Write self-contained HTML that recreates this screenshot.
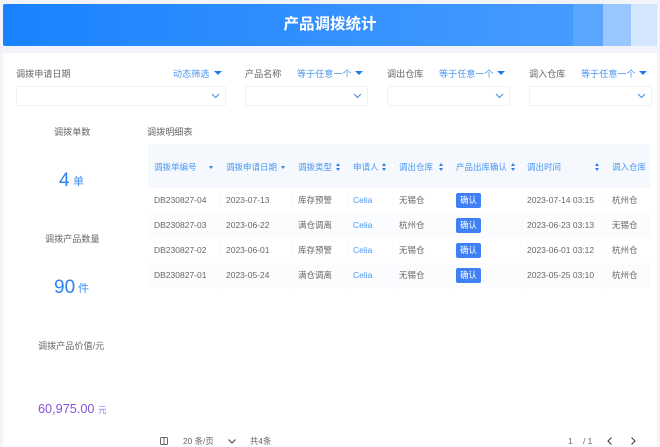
<!DOCTYPE html>
<html lang="zh"><head><meta charset="utf-8">
<style>
html,body{margin:0;padding:0;width:660px;height:447px;overflow:hidden;background:#f3f4f9}
body{position:relative;font-family:"Liberation Sans","Noto Sans CJK SC",sans-serif;color:#666;-webkit-font-smoothing:antialiased}
.a{position:absolute;white-space:nowrap;line-height:14px;font-size:9.1px}
.r{font-size:8.5px}
.hd{position:absolute;left:3px;top:4px;width:654px;height:42px;border-radius:2px;background:linear-gradient(90deg,#1a82ff,#4c9fff);overflow:hidden}
.hd i{position:absolute;top:0;height:42px;display:block}
.panel{position:absolute;left:3px;top:53px;width:654px;height:394px;background:#fff}
.sel{position:absolute;top:86px;height:20px;background:#fff;border:1px solid #eff1f5;border-radius:2px;box-sizing:border-box}
.sel svg{position:absolute;right:5px;top:6px}
.b{color:#4a96f2}
.tri{position:absolute;width:0;height:0;border-left:4px solid transparent;border-right:4px solid transparent;border-top:4.5px solid #1a7cf0}
.th{position:absolute;left:148px;top:144px;width:502px;height:44px;background:#f5f9fe}
.sep{position:absolute;top:144px;width:1px;height:145px;background:#fafbfe}
.row{position:absolute;left:148px;width:502px;height:25px}
.btn{position:absolute;left:456px;width:25px;height:15px;border-radius:2px;background:#4080f5;color:#fff;font-size:8.4px;line-height:15px;text-align:center}
.s{position:absolute;width:5px;height:9px}
.s:before{content:"";position:absolute;left:0;top:0;border-left:2.5px solid transparent;border-right:2.5px solid transparent;border-bottom:3.5px solid #2f80ea}
.s:after{content:"";position:absolute;left:0;top:4.5px;border-left:2.5px solid transparent;border-right:2.5px solid transparent;border-top:3.5px solid #2f80ea}
.d{position:absolute;border-left:2.5px solid transparent;border-right:2.5px solid transparent;border-top:3px solid #2f80ea}
</style></head><body>
<div class="hd">
<i style="left:570px;width:30px;background:#5aa6ff"></i>
<i style="left:600px;width:28px;background:#9ac6ff"></i>
<i style="left:628px;width:26px;background:#d4e6fd"></i>
</div>
<div class="a" style="left:0;width:660px;text-align:center;top:15px;line-height:20px;font-size:15.5px;font-weight:bold;color:#fff">产品调拨统计</div>
<div class="panel"></div>

<div class="a" style="left:16px;top:67px">调拨申请日期</div>
<div class="a b" style="left:173px;top:67px">动态筛选</div><div class="tri" style="left:214px;top:71px"></div>
<div class="a" style="left:245px;top:67px">产品名称</div>
<div class="a b" style="left:297px;top:67px">等于任意一个</div><div class="tri" style="left:355px;top:71px"></div>
<div class="a" style="left:387px;top:67px">调出仓库</div>
<div class="a b" style="left:439px;top:67px">等于任意一个</div><div class="tri" style="left:497px;top:71px"></div>
<div class="a" style="left:529px;top:67px">调入仓库</div>
<div class="a b" style="left:581px;top:67px">等于任意一个</div><div class="tri" style="left:639px;top:71px"></div>

<div class="sel" style="left:16px;width:210px"><svg width="9" height="6" viewBox="0 0 9 6"><path d="M1 1l3.5 3.5L8 1" fill="none" stroke="#4f8fd8" stroke-width="1.1"/></svg></div>
<div class="sel" style="left:245px;width:123px"><svg width="9" height="6" viewBox="0 0 9 6"><path d="M1 1l3.5 3.5L8 1" fill="none" stroke="#4f8fd8" stroke-width="1.1"/></svg></div>
<div class="sel" style="left:387px;width:123px"><svg width="9" height="6" viewBox="0 0 9 6"><path d="M1 1l3.5 3.5L8 1" fill="none" stroke="#4f8fd8" stroke-width="1.1"/></svg></div>
<div class="sel" style="left:529px;width:123px"><svg width="9" height="6" viewBox="0 0 9 6"><path d="M1 1l3.5 3.5L8 1" fill="none" stroke="#4f8fd8" stroke-width="1.1"/></svg></div>

<div class="a" style="left:54px;top:125px">调拨单数</div>
<div class="a" style="left:59px;top:170px;line-height:22px;font-size:19px;color:#2d82ee">4</div>
<div class="a" style="left:73px;top:175px;font-size:11px;color:#3d8bf0">单</div>
<div class="a" style="left:45px;top:232px">调拨产品数量</div>
<div class="a" style="left:54px;top:277px;line-height:22px;font-size:19px;color:#2d82ee">90</div>
<div class="a" style="left:78px;top:282px;font-size:11px;color:#3d8bf0">件</div>
<div class="a" style="left:38px;top:339px">调拨产品价值/元</div>
<div class="a" style="left:38px;top:400px;line-height:18px;font-size:12.7px;color:#8454dc">60,975.00</div>
<div class="a" style="left:98px;top:403px;font-size:8.5px;color:#9670e2">元</div>

<div class="a" style="left:147px;top:125px">调拨明细表</div>
<div class="th"></div>
<div class="row" style="top:188px;background:#fff"></div>
<div class="row" style="top:213px;background:#fbfcfe"></div>
<div class="row" style="top:238px;background:#fff"></div>
<div class="row" style="top:263px;background:#fbfcfe"></div>
<div class="sep" style="left:219px"></div><div class="sep" style="left:291px"></div><div class="sep" style="left:347px"></div><div class="sep" style="left:392px"></div><div class="sep" style="left:449px"></div><div class="sep" style="left:521px"></div><div class="sep" style="left:605px"></div>

<div class="a r b" style="left:154px;top:160px">调拨单编号</div><div class="d" style="left:209px;top:166px"></div>
<div class="a r b" style="left:226px;top:160px">调拨申请日期</div><div class="d" style="left:281px;top:166px"></div>
<div class="a r b" style="left:298px;top:160px">调拨类型</div><div class="s" style="left:336px;top:163px"></div>
<div class="a r b" style="left:353px;top:160px">申请人</div><div class="s" style="left:382px;top:163px"></div>
<div class="a r b" style="left:399px;top:160px">调出仓库</div><div class="s" style="left:439px;top:163px"></div>
<div class="a r b" style="left:456px;top:160px">产品出库确认</div><div class="s" style="left:511px;top:163px"></div>
<div class="a r b" style="left:527px;top:160px">调出时间</div><div class="s" style="left:595px;top:163px"></div>
<div class="a r b" style="left:612px;top:160px">调入仓库</div>

<div class="a r" style="left:154px;top:193px">DB230827-04</div><div class="a r" style="left:226px;top:193px">2023-07-13</div><div class="a r" style="left:298px;top:193px">库存预警</div><div class="a r b" style="left:353px;top:193px">Celia</div><div class="a r" style="left:399px;top:193px">无锡仓</div><div class="btn" style="top:193px">确认</div><div class="a r" style="left:527px;top:193px">2023-07-14 03:15</div><div class="a r" style="left:612px;top:193px">杭州仓</div>
<div class="a r" style="left:154px;top:218px">DB230827-03</div><div class="a r" style="left:226px;top:218px">2023-06-22</div><div class="a r" style="left:298px;top:218px">满仓调离</div><div class="a r b" style="left:353px;top:218px">Celia</div><div class="a r" style="left:399px;top:218px">杭州仓</div><div class="btn" style="top:218px">确认</div><div class="a r" style="left:527px;top:218px">2023-06-23 03:13</div><div class="a r" style="left:612px;top:218px">无锡仓</div>
<div class="a r" style="left:154px;top:243px">DB230827-02</div><div class="a r" style="left:226px;top:243px">2023-06-01</div><div class="a r" style="left:298px;top:243px">库存预警</div><div class="a r b" style="left:353px;top:243px">Celia</div><div class="a r" style="left:399px;top:243px">无锡仓</div><div class="btn" style="top:243px">确认</div><div class="a r" style="left:527px;top:243px">2023-06-01 03:12</div><div class="a r" style="left:612px;top:243px">杭州仓</div>
<div class="a r" style="left:154px;top:268px">DB230827-01</div><div class="a r" style="left:226px;top:268px">2023-05-24</div><div class="a r" style="left:298px;top:268px">满仓调离</div><div class="a r b" style="left:353px;top:268px">Celia</div><div class="a r" style="left:399px;top:268px">无锡仓</div><div class="btn" style="top:268px">确认</div><div class="a r" style="left:527px;top:268px">2023-05-25 03:10</div><div class="a r" style="left:612px;top:268px">杭州仓</div>

<svg style="position:absolute;left:160px;top:437px" width="8" height="8" viewBox="0 0 8 8"><rect x=".5" y=".5" width="7" height="7" rx="1" fill="none" stroke="#666"/><path d="M4 1v6" stroke="#666"/></svg>
<div class="a" style="left:183px;top:434px;font-size:8.4px">20 条/页</div>
<svg style="position:absolute;left:228px;top:439px" width="8" height="5" viewBox="0 0 8 5"><path d="M.5.5L4 4 7.5.5" fill="none" stroke="#444"/></svg>
<div class="a" style="left:250px;top:434px;font-size:8.4px">共4条</div>
<div class="a" style="left:568px;top:434px;font-size:8.4px">1</div>
<div class="a" style="left:583px;top:434px;font-size:8.4px">/ 1</div>
<svg style="position:absolute;left:607px;top:437px" width="5" height="8" viewBox="0 0 5 8"><path d="M4.5.5L1 4l3.5 3.5" fill="none" stroke="#333"/></svg>
<svg style="position:absolute;left:631px;top:437px" width="5" height="8" viewBox="0 0 5 8"><path d="M.5.5L4 4 .5 7.5" fill="none" stroke="#333"/></svg>
</body></html>
